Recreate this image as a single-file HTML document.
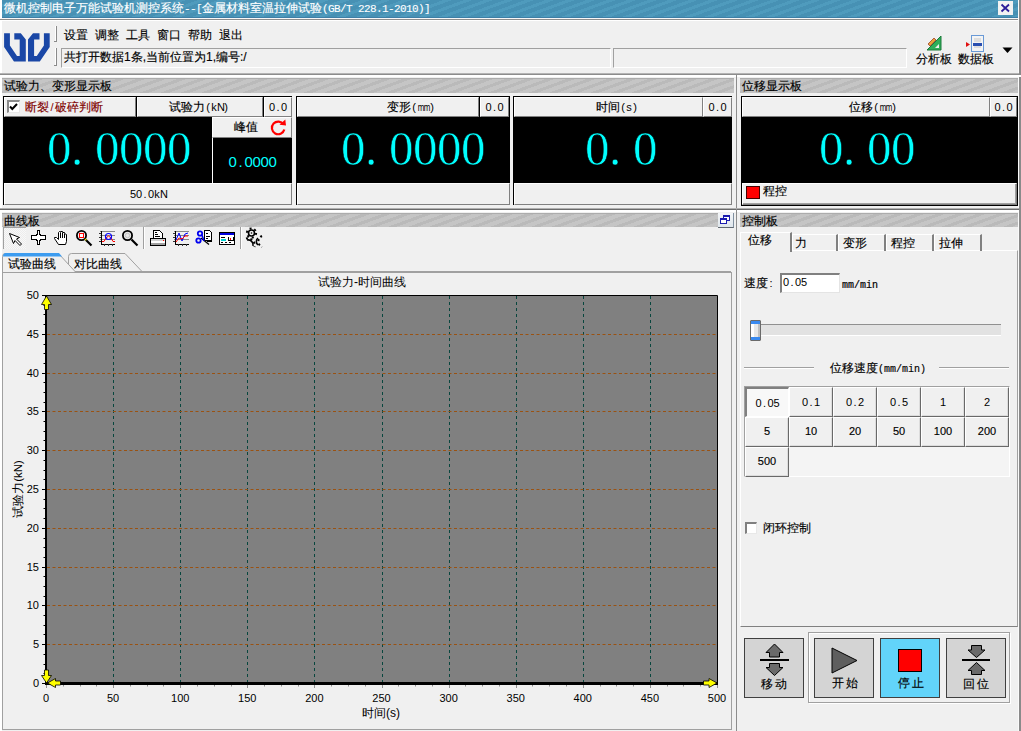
<!DOCTYPE html>
<html><head><meta charset="utf-8">
<style>
*{box-sizing:border-box;margin:0;padding:0}
html,body{width:1021px;height:731px;overflow:hidden;background:#f0f0f0;font-family:"Liberation Sans",sans-serif;font-size:12px;color:#000;-webkit-text-stroke:0.15px currentColor}
.a{position:absolute}
.title{left:2px;top:0;width:1019px;height:18px;background:linear-gradient(#0000 0 17px,#3d7fa6 17px),repeating-linear-gradient(160deg,#4791b4 0 4px,#4f9bbd 4px 7px);color:#fff;font-size:12px;line-height:17px;padding-left:2px;white-space:nowrap}
.hdr{height:15px;background:repeating-linear-gradient(160deg,#c5c5c5 0 4px,#bababa 4px 7px);border-top:1px solid #acacac;font-size:12px;line-height:14px;padding-left:2px;white-space:nowrap}
.hl{height:1px}
.vl{width:1px}
.btn{background:#f0f0f0;border-top:1px solid #fff;border-left:1px solid #fff;border-right:1px solid #808080;border-bottom:1px solid #808080;text-align:center;white-space:nowrap}
.blk{background:#000}
.m{font-family:"Liberation Sans",sans-serif;font-size:11px;white-space:nowrap;-webkit-text-stroke:0}
.m i,.m8 i{display:inline-block;width:6px;text-align:center;font-style:normal}
.m8{font-family:"Liberation Sans",sans-serif;font-size:15px;white-space:nowrap;-webkit-text-stroke:0}
.m8 i{width:8px}
.m i.n{transform:scaleX(.72)}
.dig b{display:inline-block;width:24px;font-weight:normal;-webkit-text-stroke:0.6px #000}
.dig b.d0{transform:scaleX(1)}
.dig b.dd{text-align:left}
.dig{color:#00ffff;font-family:"Liberation Serif",serif;text-align:center;white-space:nowrap}
</style></head><body>
<!-- left white strip -->
<div class="a" style="left:0;top:0;width:2px;height:731px;background:#fff"></div>
<div class="a title">微机控制电子万能试验机测控系统<span style="font-family:'Liberation Mono',monospace;font-size:11px;letter-spacing:-0.6px;-webkit-text-stroke:0.1px #fff">--[</span>金属材料室温拉伸试验<span style="font-family:'Liberation Mono',monospace;font-size:11px;letter-spacing:-0.6px;-webkit-text-stroke:0.1px #fff">(GB/T 228.1-2010)]</span></div>
<div class="a hl" style="left:0;top:18px;width:1021px;background:#f8f8f8"></div>
<div class="a hl" style="left:0;top:19px;width:1021px;background:#8c8c8c"></div>
<div class="a hl" style="left:0;top:20px;width:1021px;background:#fff"></div>

<!-- close btn -->
<div class="a" style="left:998px;top:1px;width:15px;height:14px;background:#f2f2f2"></div>
<svg class="a" style="left:998px;top:1px" width="15" height="14" viewBox="0 0 15 14"><path d="M3.5 3.5 L11 10.5 M11 3.5 L3.5 10.5" stroke="#2b1d99" stroke-width="1.8" fill="none"/></svg>
<div class="a" style="left:1018px;top:0;width:1px;height:731px;background:#fafafa"></div>
<div class="a" style="left:1019px;top:0;width:2px;height:731px;background:#8a8a8a"></div>
<!-- logo -->
<svg class="a" style="left:0;top:28px" width="56" height="40" viewBox="0 28 56 40"><g fill="#1a47a6">
<path d="M4.1 33.2 L9.9 33.2 L9.9 45.6 L17 56 L19.7 56 L19.7 39.5 L14.3 39.5 L14.3 33.2 L20.8 33.2 L25.8 39.5 L25.8 61.5 L14 61.5 L4.1 47 Z"/>
<path d="M49.7 33.2 L43.9 33.2 L43.9 45.6 L36.8 56 L34.1 56 L34.1 39.5 L39.5 39.5 L39.5 33.2 L33 33.2 L28 39.5 L28 61.5 L39.8 61.5 L49.7 47 Z"/>
</g></svg>
<!-- grippers -->
<div class="a" style="left:55px;top:26px;width:2px;height:16px;border-left:1px solid #fff;border-right:1px solid #8a8a8a"></div><div class="a" style="left:54px;top:41px;width:2px;height:1px;background:#8a8a8a"></div>
<div class="a" style="left:55px;top:48px;width:2px;height:18px;border-left:1px solid #fff;border-right:1px solid #8a8a8a"></div><div class="a" style="left:54px;top:65px;width:2px;height:1px;background:#8a8a8a"></div>
<!-- menu -->
<div class="a" style="left:64px;top:27px;line-height:16px;white-space:nowrap;word-spacing:0">
<span style="position:absolute;left:0">设置</span><span style="position:absolute;left:31px">调整</span><span style="position:absolute;left:62px">工具</span><span style="position:absolute;left:93px">窗口</span><span style="position:absolute;left:124px">帮助</span><span style="position:absolute;left:155px">退出</span></div>
<!-- status fields -->
<div class="a" style="left:61px;top:48px;width:550px;height:20px;border-top:1px solid #a0a0a0;border-left:1px solid #a0a0a0;border-right:1px solid #fff;border-bottom:1px solid #fff;line-height:17px;padding-left:2px;white-space:nowrap">共打开数据1条,当前位置为1,编号:/</div>
<div class="a" style="left:613px;top:48px;width:294px;height:20px;border-top:1px solid #a0a0a0;border-left:1px solid #a0a0a0;border-right:1px solid #fff;border-bottom:1px solid #fff"></div>
<!-- right tools -->
<svg class="a" style="left:925px;top:35px" width="18" height="16" viewBox="0 0 18 16">
<path d="M2 15 L16 1 L16 15 Z" fill="#2fae5a" stroke="#1c7a3a" stroke-width="1"/>
<path d="M10 13 L14 9 L14 13 Z" fill="#f0f0f0"/>
<path d="M3 9 L9 3 L11 5 L5 11 Z" fill="#e8a23a" stroke="#a0402a" stroke-width="0.8"/>
</svg>
<div class="a" style="left:916px;top:52px;line-height:15px;white-space:nowrap">分析板</div>
<svg class="a" style="left:966px;top:35px" width="22" height="18" viewBox="0 0 22 18">
<rect x="5.5" y="0.5" width="12" height="16" fill="#f4f4f4" stroke="#6a9ad6"/>
<path d="M8 4 H15 M8 6 H15 M8 12 H15" stroke="#c8c8c8"/>
<rect x="7" y="8" width="9" height="3" fill="#2a4fb0"/>
<path d="M0 7 L4 9.5 L0 12 Z" fill="#e01010"/>
</svg>
<div class="a" style="left:958px;top:52px;line-height:15px;white-space:nowrap">数据板</div>
<svg class="a" style="left:1002px;top:47px" width="11" height="7" viewBox="0 0 11 7"><path d="M0.5 0.5 H10.5 L5.5 6 Z" fill="#000"/></svg>

<!-- toolbar separator -->
<div class="a hl" style="left:0;top:73px;width:1019px;background:#b4b4b4"></div>
<div class="a hl" style="left:0;top:74px;width:1019px;background:#8c8c8c"></div>
<div class="a hl" style="left:0;top:75px;width:1021px;background:#fff"></div>
<div class="a hl" style="left:0;top:76px;width:1021px;background:#fff"></div>

<!-- display panel left -->
<div class="a hdr" style="left:2px;top:78px;width:732px">试验力、变形显示板</div>
<div class="a hdr" style="left:740px;top:78px;width:278px">位移显示板</div>
<div class="a vl" style="left:736px;top:74px;height:135px;background:#8c8c8c"></div>

<!-- box1 -->
<div class="a blk" style="left:3px;top:96px;width:289px;height:109px"></div>
<div class="a btn" style="left:4px;top:97px;width:132px;height:20px"></div>
<div class="a" style="left:7px;top:100px;width:13px;height:13px;background:#fff;border-top:2px solid #8a8a8a;border-left:2px solid #8a8a8a;border-right:1px solid #e8e8e8;border-bottom:1px solid #e8e8e8"></div>
<svg class="a" style="left:9px;top:103px" width="9" height="8" viewBox="0 0 9 8"><path d="M1 3.5 L3.3 6 L8 1" stroke="#000" stroke-width="2" fill="none"/></svg>
<div class="a" style="left:25px;top:98px;height:18px;line-height:18px;color:#800000;white-space:nowrap">断裂<span class="m"><i>/</i></span>破碎判断</div>
<div class="a btn" style="left:137px;top:97px;width:126px;height:20px;line-height:18px;text-align:left;padding-left:31px">试验力<span class="m"><i>(</i><i>k</i><i>N</i><i>)</i></span></div>
<div class="a btn" style="left:264px;top:97px;width:28px;height:20px;line-height:18px"><span class="m"><i>0</i><i>.</i><i>0</i></span></div>
<div class="a dig" style="left:47px;top:119px;font-size:49px;line-height:60px;text-align:left"><b class="d0">0</b><b class="dd">.</b><b class="d0">0</b><b class="d0">0</b><b class="d0">0</b><b class="d0">0</b></div>
<div class="a btn" style="left:212px;top:117px;width:80px;height:21px;line-height:19px;text-align:left;padding-left:21px">峰值</div>
<svg class="a" style="left:268px;top:118px" width="20" height="19" viewBox="0 0 20 19"><path d="M15.5 6.5 A6.3 6.3 0 1 0 16.3 11.5" stroke="#f00" stroke-width="2.2" fill="none"/><path d="M11.5 6.8 L18 7.5 L17.3 1.5 Z" fill="#f00"/></svg>
<div class="a" style="left:212px;top:138px;width:1px;height:45px;background:#fff"></div>
<div class="a" style="left:213px;top:138px;width:79px;height:45px;color:#00ffff;text-align:center;line-height:47px"><span class="m8"><i>0</i><i>.</i><i>0</i><i>0</i><i>0</i><i>0</i></span></div>
<div class="a btn" style="left:4px;top:183px;width:288px;height:22px;line-height:20px"><span class="m"><i>5</i><i>0</i><i>.</i><i>0</i><i>k</i><i>N</i></span></div>

<!-- box2 -->
<div class="a blk" style="left:296px;top:96px;width:214px;height:109px"></div>
<div class="a btn" style="left:297px;top:97px;width:182px;height:20px;line-height:18px;text-align:left;padding-left:89px">变形<span class="m"><i>(</i><i class="n">m</i><i class="n">m</i><i>)</i></span></div>
<div class="a btn" style="left:480px;top:97px;width:29px;height:20px;line-height:18px"><span class="m"><i>0</i><i>.</i><i>0</i></span></div>
<div class="a dig" style="left:341px;top:119px;font-size:49px;line-height:60px;text-align:left"><b class="d0">0</b><b class="dd">.</b><b class="d0">0</b><b class="d0">0</b><b class="d0">0</b><b class="d0">0</b></div>
<div class="a btn" style="left:297px;top:183px;width:213px;height:22px"></div>

<!-- box3 -->
<div class="a blk" style="left:513px;top:96px;width:219px;height:109px"></div>
<div class="a btn" style="left:514px;top:97px;width:189px;height:20px;line-height:18px;text-align:left;padding-left:81px">时间<span class="m"><i>(</i><i>s</i><i>)</i></span></div>
<div class="a btn" style="left:703px;top:97px;width:29px;height:20px;line-height:18px"><span class="m"><i>0</i><i>.</i><i>0</i></span></div>
<div class="a dig" style="left:585px;top:119px;font-size:49px;line-height:60px;text-align:left"><b class="d0">0</b><b class="dd">.</b><b class="d0">0</b></div>
<div class="a btn" style="left:514px;top:183px;width:218px;height:22px"></div>

<!-- box4 -->
<div class="a blk" style="left:741px;top:96px;width:277px;height:110px"></div>
<div class="a btn" style="left:742px;top:97px;width:248px;height:20px;line-height:18px;text-align:left;padding-left:106px">位移<span class="m"><i>(</i><i class="n">m</i><i class="n">m</i><i>)</i></span></div>
<div class="a btn" style="left:990px;top:97px;width:27px;height:20px;line-height:18px"><span class="m"><i>0</i><i>.</i><i>0</i></span></div>
<div class="a dig" style="left:819px;top:119px;font-size:49px;line-height:60px;text-align:left"><b class="d0">0</b><b class="dd">.</b><b class="d0">0</b><b class="d0">0</b></div>
<div class="a btn" style="left:742px;top:183px;width:275px;height:22px;box-shadow:inset -1px -1px #a0a0a0"></div>
<div class="a" style="left:746px;top:186px;width:14px;height:13px;background:#f00;border:1px solid #400"></div>
<div class="a" style="left:763px;top:181px;line-height:20px">程控</div>

<!-- separator -->
<div class="a hl" style="left:0;top:208px;width:1019px;background:#b0b0b0"></div>
<div class="a hl" style="left:0;top:209px;width:1019px;background:#6a6a6a"></div>
<div class="a hl" style="left:0;top:210px;width:1019px;background:#fff"></div>
<div class="a hl" style="left:0;top:211px;width:1019px;background:#fff"></div>
<div class="a vl" style="left:736px;top:209px;height:522px;background:#8c8c8c"></div>

<div class="a hdr" style="left:2px;top:213px;width:732px;height:14px">曲线板</div>
<div class="a hdr" style="left:740px;top:213px;width:278px;height:14px">控制板</div>

<div class="a" style="left:718px;top:213px;width:16px;height:15px;background:linear-gradient(#f4f6f8,#dfe6ec);border-right:1px solid #8090a0;border-bottom:1px solid #606870"></div>
<svg class="a" style="left:718px;top:213px" width="16" height="15" viewBox="0 0 16 15" shape-rendering="crispEdges">
<rect x="5.5" y="2.5" width="6" height="5" fill="#fff" stroke="#1c1cb0"/><rect x="5" y="2" width="7" height="2" fill="#1c1cb0"/>
<rect x="2.5" y="5.5" width="6" height="5" fill="#fff" stroke="#1c1cb0"/><rect x="2" y="5" width="7" height="2" fill="#1c1cb0"/>
</svg>
<!-- chart toolbar -->
<div class="a" style="left:3px;top:227px;width:23px;height:22px;border-top:1px solid #a0a0a0;border-left:1px solid #a0a0a0;background:repeating-conic-gradient(#f8f8f8 0 25%,#ececec 0 50%) 0 0/2px 2px"></div>
<div class="a" style="left:143px;top:227px;width:2px;height:22px;border-left:1px solid #a0a0a0;border-right:1px solid #fff"></div>
<div class="a" style="left:240px;top:227px;width:2px;height:22px;border-left:1px solid #a0a0a0;border-right:1px solid #fff"></div>
<svg class="a" style="left:0;top:226px" width="270" height="24" viewBox="0 226 270 24" shape-rendering="crispEdges">
<g fill="none" stroke="#000" stroke-width="1">
<!-- arrow -->
<path d="M9.5 233.5 L19.5 237.5 L16.5 239 L21.5 244 L20 245.5 L15 240.5 L13.5 243.5 Z" fill="#fff" shape-rendering="auto"/>
<!-- crosshair -->
<path d="M36.5 230.5 H38.5 V234.5 H39.5 V235.5 H44.5 V239.5 H39.5 V240.5 H38.5 V244.5 H36.5 V240.5 H35.5 V239.5 H30.5 V235.5 H35.5 V234.5 H36.5 Z" fill="#fff" transform="translate(0.5 0)"/>
<!-- hand -->
<path d="M58.5 244.5 L54.5 238.5 L54.5 237.5 L56.5 237.5 L58.5 239.5 L58.5 232.5 L59.5 231.5 L60.5 232.5 L60.5 231.5 L62.5 231.5 L62.5 232.5 L64.5 232.5 L64.5 233.5 L66.5 234.5 L66.5 241.5 L65.5 244.5 Z" fill="#fff" shape-rendering="auto"/>
<path d="M60.5 232.5 V237.5 M62.5 232.5 V237.5 M64.5 233.5 V237.5"/>
</g>
<!-- zoom rect magnifier -->
<circle cx="81.5" cy="235.5" r="4.6" fill="#f4f4f4" stroke="#000" stroke-width="1.8" shape-rendering="auto"/>
<rect x="79.5" y="233.5" width="4" height="4" fill="#fff" stroke="#f00" stroke-width="1.3"/>
<path d="M85.5 239.5 L91.5 245.5" stroke="#000" stroke-width="2.2" shape-rendering="auto"/>
<path d="M85 239 L86.3 240.3" stroke="#e8e800" stroke-width="1.5" shape-rendering="auto"/>
<!-- chart icon -->
<path d="M100 231.5 H115 M100 235.5 H115 M100 239.5 H115" stroke="#888"/>
<path d="M101.5 231 V244 H115" stroke="#000" fill="none"/>
<path d="M99 233.5 H101 M99 237.5 H101 M99 241.5 H101 M104.5 244 V246 M108.5 244 V246 M112.5 244 V246" stroke="#333"/>
<path d="M102 241.5 H104 L106 238 L108.5 236 L111 238 L113 241.5 H115" stroke="#f00" fill="none" shape-rendering="auto"/>
<ellipse cx="108.5" cy="236.5" rx="3" ry="3" fill="none" stroke="#00f" stroke-width="1.2" shape-rendering="auto"/>
<!-- magnifier -->
<circle cx="127.5" cy="235.5" r="4.6" fill="#e8e8e8" stroke="#000" stroke-width="1.8" shape-rendering="auto"/>
<circle cx="127.5" cy="235.5" r="2.2" fill="none" stroke="#c0c0c0" stroke-width="1" shape-rendering="auto"/>
<path d="M131.5 239.5 L137.5 245.5" stroke="#000" stroke-width="2.2" shape-rendering="auto"/>
<!-- printer -->
<path d="M153.5 230.5 H159.5 L162.5 233.5 V238.5 H153.5 Z" fill="#fff" stroke="#000"/>
<path d="M155 232.5 H157 M155 234.5 H158 M155 236.5 H160" stroke="#000"/>
<rect x="150.5" y="238.5" width="15" height="7" fill="#fff" stroke="#000"/>
<rect x="151" y="239" width="14" height="2" fill="#d0d0d0"/>
<rect x="151" y="243" width="14" height="2" fill="#a0a0a0"/>
<rect x="163" y="240" width="1" height="1" fill="#f00"/>
<!-- line chart -->
<path d="M174 231.5 H189 M174 235.5 H189 M174 239.5 H189" stroke="#888"/>
<path d="M175.5 231 V244 H189" stroke="#000" fill="none"/>
<path d="M173 233.5 H175 M173 237.5 H175 M173 241.5 H175 M178.5 244 V246 M182.5 244 V246 M186.5 244 V246" stroke="#333"/>
<path d="M176 240 L179 233 L182 241 L185 234 L188 233" stroke="#00f" fill="none" shape-rendering="auto"/>
<path d="M176 242 L179 238 L182 239 L185 236 L188 236" stroke="#f00" fill="none" shape-rendering="auto"/>
<!-- scissors doc -->
<path d="M204.5 230.5 H209.5 L211.5 232.5 V240.5 H204.5 Z" fill="#fff" stroke="#000"/>
<path d="M206 233 H208 M206 236 H210 M206 238 H208" stroke="#000"/>
<path d="M207 241.5 H212" stroke="#000"/>
<path d="M201 238 L209 244.5" stroke="#000" stroke-width="1.3" shape-rendering="auto"/>
<circle cx="200" cy="233.5" r="2.2" fill="none" stroke="#0000f0" stroke-width="1.8" shape-rendering="auto"/>
<circle cx="198.5" cy="240.5" r="2.2" fill="none" stroke="#0000f0" stroke-width="1.8" shape-rendering="auto"/>
<path d="M202 235 L204 241" stroke="#0000f0" stroke-width="1.5" shape-rendering="auto"/>
<!-- window -->
<rect x="219.5" y="232.5" width="15" height="12" fill="#fff" stroke="#000"/>
<rect x="220" y="233" width="14" height="2" fill="#0000e0"/>
<path d="M221 237.5 H225 M221 242.5 H223 M225 242.5 H227 M229 242.5 H231" stroke="#000"/>
<path d="M221 240 H226" stroke="#00d0d0" stroke-width="1.2"/>
<path d="M228.5 237 V240.5 H233 V237" stroke="#000" fill="none"/>
<path d="M230.5 238 V240" stroke="#f00"/>
<!-- gears -->
<g fill="none" stroke="#000" shape-rendering="auto">
<circle cx="251.5" cy="233" r="3" stroke-width="1.6"/>
<circle cx="251.5" cy="233" r="0.8" fill="#000" stroke="none"/>
<circle cx="251.5" cy="233" r="4.6" stroke-width="2" stroke-dasharray="2 2.8"/>
<path d="M258 238 A4.5 4.5 0 0 0 258 245" stroke-width="1.6"/>
<path d="M262 236 A6 6 0 0 0 262 247" stroke-width="2" stroke-dasharray="2 2.5"/>
<path d="M247 240 A5 5 0 0 1 253 246" stroke-width="1.6"/>
<path d="M246 238.5 A7 7 0 0 1 254.5 247" stroke-width="2" stroke-dasharray="2 2.5"/>
</g>
</svg>
<!-- chart plot -->
<div class="a" style="left:2px;top:272px;width:730px;height:458px;border-top:1px solid #a0a0a0;border-left:1px solid #a0a0a0;border-right:1px solid #a0a0a0;border-bottom:1px solid #a0a0a0"></div>
<svg class="a" style="left:0;top:0" width="736" height="731" viewBox="0 0 736 731">
<path d="M2.5 272 V256.5 Q2.5 253.5 5.5 253.5 H58.5 L75.5 272" fill="#f0f0f0" stroke="#a0a0a0"/>
<path d="M3 256.5 Q3 253 6 253 H59 L62 256.5 Z" fill="#3c9cf0"/>
<path d="M68.5 264 V256.5 Q68.5 253.5 71.5 253.5 H125 L142 271.5" fill="none" stroke="#a0a0a0"/>
<path d="M75 271.5 H731" stroke="#a0a0a0"/>
<rect x="46" y="295" width="671" height="388" fill="#808080"/>
<path d="M113.5 296 V682" stroke="#08463e" stroke-dasharray="3 3"/>
<path d="M180.5 296 V682" stroke="#08463e" stroke-dasharray="3 3"/>
<path d="M247.5 296 V682" stroke="#08463e" stroke-dasharray="3 3"/>
<path d="M314.5 296 V682" stroke="#08463e" stroke-dasharray="3 3"/>
<path d="M382.5 296 V682" stroke="#08463e" stroke-dasharray="3 3"/>
<path d="M449.5 296 V682" stroke="#08463e" stroke-dasharray="3 3"/>
<path d="M516.5 296 V682" stroke="#08463e" stroke-dasharray="3 3"/>
<path d="M583.5 296 V682" stroke="#08463e" stroke-dasharray="3 3"/>
<path d="M650.5 296 V682" stroke="#08463e" stroke-dasharray="3 3"/>
<path d="M47 644.5 H717" stroke="#9a5212" stroke-dasharray="3 2.5"/>
<path d="M47 605.5 H717" stroke="#9a5212" stroke-dasharray="3 2.5"/>
<path d="M47 567.5 H717" stroke="#9a5212" stroke-dasharray="3 2.5"/>
<path d="M47 528.5 H717" stroke="#9a5212" stroke-dasharray="3 2.5"/>
<path d="M47 489.5 H717" stroke="#9a5212" stroke-dasharray="3 2.5"/>
<path d="M47 450.5 H717" stroke="#9a5212" stroke-dasharray="3 2.5"/>
<path d="M47 411.5 H717" stroke="#9a5212" stroke-dasharray="3 2.5"/>
<path d="M47 373.5 H717" stroke="#9a5212" stroke-dasharray="3 2.5"/>
<path d="M47 334.5 H717" stroke="#9a5212" stroke-dasharray="3 2.5"/>
<path d="M45 295.5 H717.5 V683" stroke="#000" fill="none"/>
<path d="M46 295 V684" stroke="#000" stroke-width="2"/>
<path d="M45 683.5 H718" stroke="#000" stroke-width="3"/>
<path d="M42 683.5 H45" stroke="#000"/>
<text x="39" y="687.0" text-anchor="end" font-size="11" font-family="Liberation Sans" fill="#000">0</text>
<path d="M42 644.5 H45" stroke="#000"/>
<text x="39" y="648.2" text-anchor="end" font-size="11" font-family="Liberation Sans" fill="#000">5</text>
<path d="M42 605.5 H45" stroke="#000"/>
<text x="39" y="609.4" text-anchor="end" font-size="11" font-family="Liberation Sans" fill="#000">10</text>
<path d="M42 567.5 H45" stroke="#000"/>
<text x="39" y="570.6" text-anchor="end" font-size="11" font-family="Liberation Sans" fill="#000">15</text>
<path d="M42 528.5 H45" stroke="#000"/>
<text x="39" y="531.8" text-anchor="end" font-size="11" font-family="Liberation Sans" fill="#000">20</text>
<path d="M42 489.5 H45" stroke="#000"/>
<text x="39" y="493.0" text-anchor="end" font-size="11" font-family="Liberation Sans" fill="#000">25</text>
<path d="M42 450.5 H45" stroke="#000"/>
<text x="39" y="454.20000000000005" text-anchor="end" font-size="11" font-family="Liberation Sans" fill="#000">30</text>
<path d="M42 411.5 H45" stroke="#000"/>
<text x="39" y="415.40000000000003" text-anchor="end" font-size="11" font-family="Liberation Sans" fill="#000">35</text>
<path d="M42 373.5 H45" stroke="#000"/>
<text x="39" y="376.6" text-anchor="end" font-size="11" font-family="Liberation Sans" fill="#000">40</text>
<path d="M42 334.5 H45" stroke="#000"/>
<text x="39" y="337.8" text-anchor="end" font-size="11" font-family="Liberation Sans" fill="#000">45</text>
<path d="M42 295.5 H45" stroke="#000"/>
<text x="39" y="299.0" text-anchor="end" font-size="11" font-family="Liberation Sans" fill="#000">50</text>
<path d="M43.5 673.5 H45" stroke="#000"/>
<path d="M43.5 664.5 H45" stroke="#000"/>
<path d="M43.5 654.5 H45" stroke="#000"/>
<path d="M43.5 634.5 H45" stroke="#000"/>
<path d="M43.5 625.5 H45" stroke="#000"/>
<path d="M43.5 615.5 H45" stroke="#000"/>
<path d="M43.5 596.5 H45" stroke="#000"/>
<path d="M43.5 586.5 H45" stroke="#000"/>
<path d="M43.5 576.5 H45" stroke="#000"/>
<path d="M43.5 557.5 H45" stroke="#000"/>
<path d="M43.5 547.5 H45" stroke="#000"/>
<path d="M43.5 538.5 H45" stroke="#000"/>
<path d="M43.5 518.5 H45" stroke="#000"/>
<path d="M43.5 508.5 H45" stroke="#000"/>
<path d="M43.5 499.5 H45" stroke="#000"/>
<path d="M43.5 479.5 H45" stroke="#000"/>
<path d="M43.5 470.5 H45" stroke="#000"/>
<path d="M43.5 460.5 H45" stroke="#000"/>
<path d="M43.5 440.5 H45" stroke="#000"/>
<path d="M43.5 431.5 H45" stroke="#000"/>
<path d="M43.5 421.5 H45" stroke="#000"/>
<path d="M43.5 402.5 H45" stroke="#000"/>
<path d="M43.5 392.5 H45" stroke="#000"/>
<path d="M43.5 382.5 H45" stroke="#000"/>
<path d="M43.5 363.5 H45" stroke="#000"/>
<path d="M43.5 353.5 H45" stroke="#000"/>
<path d="M43.5 344.5 H45" stroke="#000"/>
<path d="M43.5 324.5 H45" stroke="#000"/>
<path d="M43.5 314.5 H45" stroke="#000"/>
<path d="M43.5 305.5 H45" stroke="#000"/>
<path d="M46.5 685 V688" stroke="#909090"/>
<text x="46.0" y="702" text-anchor="middle" font-size="11" font-family="Liberation Sans" fill="#000">0</text>
<path d="M113.5 685 V688" stroke="#909090"/>
<text x="113.1" y="702" text-anchor="middle" font-size="11" font-family="Liberation Sans" fill="#000">50</text>
<path d="M180.5 685 V688" stroke="#909090"/>
<text x="180.2" y="702" text-anchor="middle" font-size="11" font-family="Liberation Sans" fill="#000">100</text>
<path d="M247.5 685 V688" stroke="#909090"/>
<text x="247.3" y="702" text-anchor="middle" font-size="11" font-family="Liberation Sans" fill="#000">150</text>
<path d="M314.5 685 V688" stroke="#909090"/>
<text x="314.4" y="702" text-anchor="middle" font-size="11" font-family="Liberation Sans" fill="#000">200</text>
<path d="M382.5 685 V688" stroke="#909090"/>
<text x="381.5" y="702" text-anchor="middle" font-size="11" font-family="Liberation Sans" fill="#000">250</text>
<path d="M449.5 685 V688" stroke="#909090"/>
<text x="448.6" y="702" text-anchor="middle" font-size="11" font-family="Liberation Sans" fill="#000">300</text>
<path d="M516.5 685 V688" stroke="#909090"/>
<text x="515.7" y="702" text-anchor="middle" font-size="11" font-family="Liberation Sans" fill="#000">350</text>
<path d="M583.5 685 V688" stroke="#909090"/>
<text x="582.8" y="702" text-anchor="middle" font-size="11" font-family="Liberation Sans" fill="#000">400</text>
<path d="M650.5 685 V688" stroke="#909090"/>
<text x="649.9" y="702" text-anchor="middle" font-size="11" font-family="Liberation Sans" fill="#000">450</text>
<path d="M717.5 685 V688" stroke="#909090"/>
<text x="717.0" y="702" text-anchor="middle" font-size="11" font-family="Liberation Sans" fill="#000">500</text>
<path d="M63.5 685 V686.5" stroke="#909090"/>
<path d="M80.5 685 V686.5" stroke="#909090"/>
<path d="M96.5 685 V686.5" stroke="#909090"/>
<path d="M130.5 685 V686.5" stroke="#909090"/>
<path d="M147.5 685 V686.5" stroke="#909090"/>
<path d="M163.5 685 V686.5" stroke="#909090"/>
<path d="M197.5 685 V686.5" stroke="#909090"/>
<path d="M214.5 685 V686.5" stroke="#909090"/>
<path d="M231.5 685 V686.5" stroke="#909090"/>
<path d="M264.5 685 V686.5" stroke="#909090"/>
<path d="M281.5 685 V686.5" stroke="#909090"/>
<path d="M298.5 685 V686.5" stroke="#909090"/>
<path d="M331.5 685 V686.5" stroke="#909090"/>
<path d="M348.5 685 V686.5" stroke="#909090"/>
<path d="M365.5 685 V686.5" stroke="#909090"/>
<path d="M398.5 685 V686.5" stroke="#909090"/>
<path d="M415.5 685 V686.5" stroke="#909090"/>
<path d="M432.5 685 V686.5" stroke="#909090"/>
<path d="M465.5 685 V686.5" stroke="#909090"/>
<path d="M482.5 685 V686.5" stroke="#909090"/>
<path d="M499.5 685 V686.5" stroke="#909090"/>
<path d="M532.5 685 V686.5" stroke="#909090"/>
<path d="M549.5 685 V686.5" stroke="#909090"/>
<path d="M566.5 685 V686.5" stroke="#909090"/>
<path d="M600.5 685 V686.5" stroke="#909090"/>
<path d="M616.5 685 V686.5" stroke="#909090"/>
<path d="M633.5 685 V686.5" stroke="#909090"/>
<path d="M667.5 685 V686.5" stroke="#909090"/>
<path d="M683.5 685 V686.5" stroke="#909090"/>
<path d="M700.5 685 V686.5" stroke="#909090"/>
<path d="M46.5 296 L51.5 304.5 H48.5 V309.5 H44.5 V304.5 H41.5 Z" fill="#ffff00" stroke="#000" stroke-width="0.8"/>
<path d="M46.5 683 L51.5 675.5 H48.5 V670 H44.5 V675.5 H41.5 Z" fill="#ffff00" stroke="#000" stroke-width="0.8"/>
<path d="M47.5 683 L55.5 678.5 V681 H60.5 V685 H55.5 V687.5 Z" fill="#ffff00" stroke="#000" stroke-width="0.8"/>
<path d="M717 683 L709 678.5 V681 H703.5 V685 H709 V687.5 Z" fill="#ffff00" stroke="#000" stroke-width="0.8"/>
<text x="362" y="286" text-anchor="middle" font-size="12" font-family="Liberation Sans" fill="#000">试验力-时间曲线</text>
<text x="381" y="717" text-anchor="middle" font-size="12" font-family="Liberation Sans" fill="#000">时间(s)</text>
<text transform="translate(21.5 489) rotate(-90)" text-anchor="middle" font-size="11.5" font-family="Liberation Sans" fill="#000">试验力(kN)</text>
</svg>
<div class="a" style="left:8px;top:257px;line-height:14px;white-space:nowrap">试验曲线</div>
<div class="a" style="left:74px;top:257px;line-height:14px;white-space:nowrap">对比曲线</div>
<!-- control board -->
<div class="a" style="left:740px;top:250px;width:278px;height:377px;border-top:1px solid #fff;border-left:1px solid #fff;border-right:1px solid #a0a0a0;border-bottom:1px solid #808080"></div>
<div class="a" style="left:792px;top:234px;width:46px;height:17px;border-top:1px solid #fff;border-left:1px solid #fff;border-right:2px solid #808080"></div>
<div class="a" style="left:838px;top:234px;width:48px;height:17px;border-top:1px solid #fff;border-left:1px solid #fff;border-right:2px solid #808080"></div>
<div class="a" style="left:886px;top:234px;width:48px;height:17px;border-top:1px solid #fff;border-left:1px solid #fff;border-right:2px solid #808080"></div>
<div class="a" style="left:934px;top:234px;width:48px;height:17px;border-top:1px solid #fff;border-left:1px solid #fff;border-right:2px solid #808080"></div>
<div class="a" style="left:740px;top:232px;width:52px;height:20px;background:#f0f0f0;border-top:1px solid #fff;border-left:1px solid #fff;border-right:2px solid #808080"></div>
<div class="a" style="left:748px;top:233px;line-height:14px">位移</div>
<div class="a" style="left:795px;top:236px;line-height:14px">力</div>
<div class="a" style="left:843px;top:236px;line-height:14px">变形</div>
<div class="a" style="left:891px;top:236px;line-height:14px">程控</div>
<div class="a" style="left:939px;top:236px;line-height:14px">拉伸</div>
<div class="a" style="left:744px;top:276px;line-height:14px">速度<span class="m"><i>:</i></span></div>
<div class="a" style="left:780px;top:273px;width:60px;height:20px;background:#fff;border-top:2px solid #808080;border-left:2px solid #808080;border-right:1px solid #e4e4e4;border-bottom:1px solid #e4e4e4;line-height:15px;padding-left:1px"><span class="m"><i>0</i><i>.</i><i>0</i><i>5</i></span></div>
<div class="a" style="left:842px;top:279px;line-height:14px;font-family:'Liberation Mono',monospace;font-size:10px;-webkit-text-stroke:0.2px #000">mm/min</div>
<!-- slider -->
<div class="a" style="left:760px;top:324px;width:241px;height:12px;background:#e2e2e2;border-top:1px solid #909090;border-bottom:1px solid #fff"></div>
<div class="a" style="left:750px;top:320px;width:11px;height:21px;background:linear-gradient(90deg,#fff 0 3px,#e8e8e8 3px 7px,#c0c0c0 7px);border:1px solid #6a6a6a;border-radius:1px"></div>
<div class="a" style="left:751px;top:321px;width:9px;height:3px;background:#3a8af0"></div>
<div class="a" style="left:751px;top:337px;width:9px;height:3px;background:#3a8af0"></div>
<!-- group -->
<div class="a" style="left:744px;top:367px;width:70px;height:2px;border-top:1px solid #a0a0a0;border-bottom:1px solid #fff"></div>
<div class="a" style="left:939px;top:367px;width:70px;height:2px;border-top:1px solid #a0a0a0;border-bottom:1px solid #fff"></div>
<div class="a" style="left:830px;top:361px;line-height:14px;white-space:nowrap">位移速度<span style="font-family:'Liberation Mono',monospace;font-size:10px">(mm/min)</span></div>
<div class="a" style="left:744px;top:386px;width:266px;height:91px;background:#f4f4f4;border-top:1px solid #a0a0a0;border-left:1px solid #a0a0a0;border-right:1px solid #fff;border-bottom:1px solid #fff"></div>
<div class="a" style="left:745px;top:387px;width:44px;height:30px;background:#f8f8f8;border-top:2px solid #808080;border-left:2px solid #808080;border-right:1px solid #fff;border-bottom:1px solid #fff;text-align:center;line-height:28px"><span class="m"><i>0</i><i>.</i><i>0</i><i>5</i></span></div>
<div class="a" style="left:789px;top:387px;width:44px;height:30px;background:#f0f0f0;border-top:1px solid #fff;border-left:1px solid #fff;border-right:1px solid #696969;border-bottom:1px solid #696969;box-shadow:inset -1px -1px #dcdcdc;text-align:center;line-height:28px"><span class="m"><i>0</i><i>.</i><i>1</i></span></div>
<div class="a" style="left:833px;top:387px;width:44px;height:30px;background:#f0f0f0;border-top:1px solid #fff;border-left:1px solid #fff;border-right:1px solid #696969;border-bottom:1px solid #696969;box-shadow:inset -1px -1px #dcdcdc;text-align:center;line-height:28px"><span class="m"><i>0</i><i>.</i><i>2</i></span></div>
<div class="a" style="left:877px;top:387px;width:44px;height:30px;background:#f0f0f0;border-top:1px solid #fff;border-left:1px solid #fff;border-right:1px solid #696969;border-bottom:1px solid #696969;box-shadow:inset -1px -1px #dcdcdc;text-align:center;line-height:28px"><span class="m"><i>0</i><i>.</i><i>5</i></span></div>
<div class="a" style="left:921px;top:387px;width:44px;height:30px;background:#f0f0f0;border-top:1px solid #fff;border-left:1px solid #fff;border-right:1px solid #696969;border-bottom:1px solid #696969;box-shadow:inset -1px -1px #dcdcdc;text-align:center;line-height:28px"><span class="m"><i>1</i></span></div>
<div class="a" style="left:965px;top:387px;width:44px;height:30px;background:#f0f0f0;border-top:1px solid #fff;border-left:1px solid #fff;border-right:1px solid #696969;border-bottom:1px solid #696969;box-shadow:inset -1px -1px #dcdcdc;text-align:center;line-height:28px"><span class="m"><i>2</i></span></div>
<div class="a" style="left:745px;top:417px;width:44px;height:30px;background:#f0f0f0;border-top:1px solid #fff;border-left:1px solid #fff;border-right:1px solid #696969;border-bottom:1px solid #696969;box-shadow:inset -1px -1px #dcdcdc;text-align:center;line-height:27px"><span style="font-size:11px">5</span></div>
<div class="a" style="left:789px;top:417px;width:44px;height:30px;background:#f0f0f0;border-top:1px solid #fff;border-left:1px solid #fff;border-right:1px solid #696969;border-bottom:1px solid #696969;box-shadow:inset -1px -1px #dcdcdc;text-align:center;line-height:27px"><span style="font-size:11px">10</span></div>
<div class="a" style="left:833px;top:417px;width:44px;height:30px;background:#f0f0f0;border-top:1px solid #fff;border-left:1px solid #fff;border-right:1px solid #696969;border-bottom:1px solid #696969;box-shadow:inset -1px -1px #dcdcdc;text-align:center;line-height:27px"><span style="font-size:11px">20</span></div>
<div class="a" style="left:877px;top:417px;width:44px;height:30px;background:#f0f0f0;border-top:1px solid #fff;border-left:1px solid #fff;border-right:1px solid #696969;border-bottom:1px solid #696969;box-shadow:inset -1px -1px #dcdcdc;text-align:center;line-height:27px"><span style="font-size:11px">50</span></div>
<div class="a" style="left:921px;top:417px;width:44px;height:30px;background:#f0f0f0;border-top:1px solid #fff;border-left:1px solid #fff;border-right:1px solid #696969;border-bottom:1px solid #696969;box-shadow:inset -1px -1px #dcdcdc;text-align:center;line-height:27px"><span style="font-size:11px">100</span></div>
<div class="a" style="left:965px;top:417px;width:44px;height:30px;background:#f0f0f0;border-top:1px solid #fff;border-left:1px solid #fff;border-right:1px solid #696969;border-bottom:1px solid #696969;box-shadow:inset -1px -1px #dcdcdc;text-align:center;line-height:27px"><span style="font-size:11px">200</span></div>
<div class="a" style="left:745px;top:447px;width:44px;height:30px;background:#f0f0f0;border-top:1px solid #fff;border-left:1px solid #fff;border-right:1px solid #696969;border-bottom:1px solid #696969;box-shadow:inset -1px -1px #dcdcdc;text-align:center;line-height:27px"><span style="font-size:11px">500</span></div>
<div class="a" style="left:745px;top:522px;width:12px;height:12px;background:#fff;border-top:2px solid #808080;border-left:2px solid #808080;border-right:1px solid #e8e8e8;border-bottom:1px solid #e8e8e8"></div>
<div class="a" style="left:763px;top:521px;line-height:14px">闭环控制</div>
<!-- bottom buttons -->
<div class="a" style="left:808px;top:632px;width:202px;height:71px;border-top:1px solid #a0a0a0;border-left:1px solid #a0a0a0;border-right:1px solid #a0a0a0;border-bottom:1px solid #a0a0a0;box-shadow:inset 1px 1px #fff, 1px 1px #fff"></div>
<div class="a" style="left:744px;top:638px;width:60px;height:60px;background:#d4d4d4;border:1px solid #404040"></div>
<div class="a" style="left:814px;top:638px;width:60px;height:60px;background:#d4d4d4;border:1px solid #404040"></div>
<div class="a" style="left:880px;top:638px;width:60px;height:60px;background:#62d4fa;border:1px solid #404040"></div>
<div class="a" style="left:946px;top:638px;width:60px;height:60px;background:#d4d4d4;border:1px solid #404040"></div>
<svg class="a" style="left:744px;top:638px" width="263" height="60" viewBox="744 638 263 60">
<path d="M774.5 644 L783 652.5 H779.5 V657 H769.5 V652.5 H766 Z" fill="#6a6a6a" stroke="#000" stroke-width="1"/>
<path d="M760 660 H789" stroke="#000" stroke-width="2"/>
<path d="M774.5 675.5 L783 667.5 H779.5 V663.5 H769.5 V667.5 H766 Z" fill="#6a6a6a" stroke="#000" stroke-width="1"/>
<path d="M832 648 L857 660.5 L832 673 Z" fill="#5e5e5e" stroke="#000" stroke-width="1"/>
<rect x="898.5" y="649.5" width="23" height="22" fill="#f00" stroke="#000" stroke-width="1"/>
<path d="M976.5 657.5 L985 650 H981.5 V645.5 H971.5 V650 H968 Z" fill="#6a6a6a" stroke="#000" stroke-width="1"/>
<path d="M962 660 H990" stroke="#000" stroke-width="2"/>
<path d="M976.5 662.5 L985 670.5 H981.5 V674.5 H971.5 V670.5 H968 Z" fill="#6a6a6a" stroke="#000" stroke-width="1"/>
</svg>
<div class="a" style="left:761px;top:677px;line-height:14px;letter-spacing:2px">移动</div>
<div class="a" style="left:832px;top:676px;line-height:14px;letter-spacing:2px">开始</div>
<div class="a" style="left:898px;top:676px;line-height:14px;letter-spacing:2px">停止</div>
<div class="a" style="left:963px;top:677px;line-height:14px;letter-spacing:2px">回位</div>
</body></html>
